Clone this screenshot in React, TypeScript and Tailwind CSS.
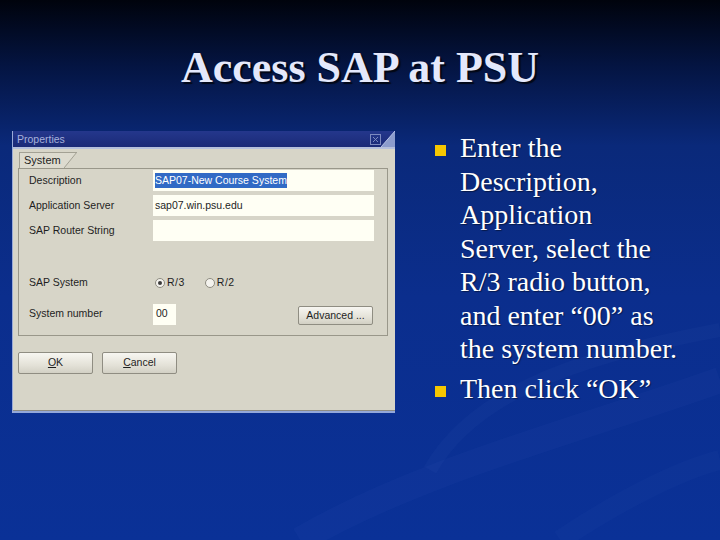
import type { ReactNode } from "react";

const sansFont = "font-['Liberation_Sans',Arial,sans-serif]";
const serifFont = "font-['Liberation_Serif','Times_New_Roman',serif]";

/** faint background swirls, lower right */
function Swirls() {
  return (
    <svg
      className="absolute inset-0"
      width="720"
      height="540"
      viewBox="0 0 720 540"
      fill="none"
    >
      <path
        d="M 300 540 C 420 470, 580 430, 720 380"
        stroke="rgba(120,150,230,0.045)"
        strokeWidth="26"
      />
      <path
        d="M 430 470 C 470 400, 560 360, 720 330"
        stroke="rgba(120,150,230,0.04)"
        strokeWidth="14"
      />
      <path
        d="M 560 540 C 620 500, 680 470, 720 460"
        stroke="rgba(120,150,230,0.035)"
        strokeWidth="20"
      />
    </svg>
  );
}

function CloseBox() {
  return (
    <svg width="11" height="11" viewBox="0 0 11 11" fill="none">
      <rect x="0.5" y="0.5" width="10" height="10" stroke="#7c89bf" />
      <path d="M3 3 L8 8 M8 3 L3 8" stroke="#7c89bf" strokeWidth="1" />
    </svg>
  );
}

function Input({ children, className = "" }: { children?: ReactNode; className?: string }) {
  return (
    <div className={"flex h-[21px] items-center bg-[#fffff4] px-[2px] " + className}>
      {children}
    </div>
  );
}

function Row({ label, children, className = "" }: { label: string; children: ReactNode; className?: string }) {
  return (
    <div className={"flex items-center " + className}>
      <span className="w-[124px] shrink-0">{label}</span>
      {children}
    </div>
  );
}

function Radio({ checked }: { checked?: boolean }) {
  return (
    <span className="flex h-[10px] w-[10px] items-center justify-center rounded-full border border-[#8d8b80] bg-[#f4f3ee]">
      {checked && <span className="h-[4px] w-[4px] rounded-full bg-[#3a3a3a]" />}
    </span>
  );
}

function XpButton({ children, className = "" }: { children: ReactNode; className?: string }) {
  return (
    <div
      className={
        "flex w-[75px] items-center justify-center rounded-[2px] border border-[#8f8d82] bg-[linear-gradient(180deg,#f7f6f1,#e4e2d8_60%,#d2d0c4)] " +
        className
      }
    >
      {children}
    </div>
  );
}

function PropertiesDialog() {
  return (
    <div
      className={
        "relative ml-[12px] flex w-[383px] shrink-0 flex-col border-l border-[#9aaad8] text-[10.5px] text-[#1e1e1e] " +
        sansFont
      }
    >
      {/* Title bar */}
      <div className="flex h-[16px] items-center justify-between bg-[linear-gradient(180deg,#24378c,#1b2a77)] pl-[4px] pr-[14px]">
        <span className="leading-none text-[#a6b0dc]">Properties</span>
        <CloseBox />
      </div>
      <svg
        className="absolute right-0 top-0"
        width="14"
        height="16"
        viewBox="0 0 14 16"
      >
        <polygon points="14,0 14,16 0,16" fill="#8c9ccc" />
        <line x1="0" y1="16" x2="14" y2="0" stroke="#b7c3e8" strokeWidth="1" />
      </svg>
      <div className="h-[2px] bg-[#b6c0dc]" />

      {/* Body */}
      <div className="flex h-[261px] flex-col bg-[#d7d5c8] pl-[5px] pr-[7px] pt-[3px]">
        {/* Tab */}
        <div className="flex h-[16px]">
          <div className="ml-[1px] flex h-[16px] items-center border-l border-t border-[#a3a194] bg-[#dddbcf] pl-[4px] pr-[3px] text-[11px]">
            System
          </div>
          <svg width="13" height="16" viewBox="0 0 13 16">
            <polygon points="0,0 13,0 0,16" fill="#dddbcf" />
            <line x1="0" y1="0.5" x2="13" y2="0.5" stroke="#a3a194" />
            <line x1="13" y1="0" x2="0" y2="16" stroke="#a3a194" />
          </svg>
        </div>

        {/* Group */}
        <div className="flex flex-col gap-[4px] border border-[#99978a] pb-[10px] pl-[10px] pr-[13px] pt-[1px]">
          <Row label="Description">
            <Input className="flex-1">
              <span className="bg-[#316ac5] text-white">SAP07-New Course System</span>
            </Input>
          </Row>
          <Row label="Application Server">
            <Input className="flex-1">sap07.win.psu.edu</Input>
          </Row>
          <Row label="SAP Router String">
            <Input className="flex-1" />
          </Row>
          <Row label="SAP System" className="mt-[31px] h-[14px]">
            <div className="flex items-center pl-[2px] tracking-[0.5px]">
              <Radio checked />
              <span className="ml-[2px]">R/3</span>
              <span className="ml-[20px]">
                <Radio />
              </span>
              <span className="ml-[2px]">R/2</span>
            </div>
          </Row>
          <Row label="System number" className="mt-[9px]">
            <Input className="w-[23px] pl-[3px]">00</Input>
            <div className="flex-1" />
            <XpButton className="mr-[1px] mt-[3px] h-[19px]">Advanced ...</XpButton>
          </Row>
        </div>

        {/* Buttons */}
        <div className="mt-[16px] flex gap-[9px]">
          <XpButton className="h-[22px]">
            <span>
              <span className="underline">O</span>K
            </span>
          </XpButton>
          <XpButton className="h-[22px]">
            <span>
              <span className="underline">C</span>ancel
            </span>
          </XpButton>
        </div>
      </div>
      <div className="h-px bg-[#8e8c82]" />
      <div className="h-[2px] bg-[#93a8da]" />
    </div>
  );
}

function Bullet({ children, className = "" }: { children: ReactNode; className?: string }) {
  return (
    <div className={"flex items-start " + className}>
      <span className="mt-[14px] h-[11px] w-[11px] shrink-0 bg-[#f6c700]" />
      <p className="ml-[14px] whitespace-nowrap">{children}</p>
    </div>
  );
}

export default function App() {
  return (
    <div className="relative h-[540px] w-[720px] overflow-hidden bg-[linear-gradient(180deg,#00030c_0%,#041441_12%,#0a297a_27%,#0b2e8d_55%,#0a3197_100%)]">
      <Swirls />
      <div className="relative flex flex-col">
        {/* Title */}
        <h1
          className={
            "mt-[46px] h-[44px] text-center text-[44px] font-bold leading-[44px] text-[#e4e8fb] [text-shadow:2px_2px_1px_rgba(0,0,0,0.7)] " +
            serifFont
          }
        >
          Access SAP at PSU
        </h1>

        <div className="mt-[41px] flex items-start">
          <PropertiesDialog />

          {/* Bullets */}
          <div
            className={
              "ml-[40px] flex flex-col text-[28px] leading-[33.5px] text-white [text-shadow:1px_1px_1px_rgba(0,0,0,0.45)] " +
              serifFont
            }
          >
            <Bullet>
              Enter the
              <br />
              Description,
              <br />
              Application
              <br />
              Server, select the
              <br />
              R/3 radio button,
              <br />
              and enter “00” as
              <br />
              the system number.
            </Bullet>
            <Bullet className="mt-[6px]">Then click “OK”</Bullet>
          </div>
        </div>
      </div>
    </div>
  );
}
